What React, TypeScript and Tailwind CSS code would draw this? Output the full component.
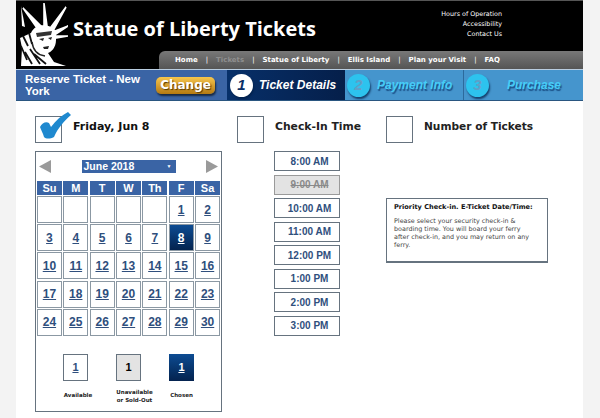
const F = { fontFamily: '"DejaVu Sans", sans-serif' };
const A = { fontFamily: '"Liberation Sans", Arial, sans-serif' };

function Statue() {
  return (
    <svg width="50" height="66" viewBox="0 0 50 66" className="shrink-0">
      <g stroke="#fff" strokeWidth="1.6" fill="#fff">
        <path d="M26 24 L26 1 L29 24Z" />
        <path d="M19 26 L5 6 L23 24Z" />
        <path d="M33 25 L48 5 L36 27Z" />
        <path d="M37 29 L50 24 L38 32Z" />
        <path d="M38 34 L50 34 L38 36Z" />
      </g>
      <path d="M4 24 L3 4 L7 25Z" fill="#fff" />
      <path d="M13 31 C18 20 34 22 38 30 L38 38 C38 46 33 50 30 51 L36 60 L48 64 L3 64 L4 46 L2 36 Z" fill="#fff" />
      <path d="M18 31 L34 29 L33 33 L19 35Z" fill="#333" />
      <path d="M21 37 L26 36 L25 39 Z M30 36 L34 35 L33 38 Z M25 45 L31 44 L30 47 L26 47 Z" fill="#222" />
      <path d="M5 34 L10 44 M7 50 L14 62 M12 47 L22 62 M3 44 L9 58 M16 52 L28 62 M11 31 L14 42" stroke="#111" strokeWidth="1.8" fill="none" />
      <path d="M14 40 C15 48 19 53 27 54" stroke="#222" strokeWidth="1.5" fill="none" />
    </svg>
  );
}

function Circle({ n, active }: { n: string; active?: boolean }) {
  return (
    <span
      className={`flex h-[23px] w-[23px] shrink-0 items-center justify-center rounded-full text-[15px] font-bold italic shadow-[1px_2px_2px_rgba(0,30,70,0.7)] ${
        active ? "bg-white text-[#0b2f66]" : "bg-[#2dc3ee] text-[#5f9fc8]"
      }`}
      style={A}
    >
      {n}
    </span>
  );
}

const days: (number | null)[] = [null, null, null, null, null, 1, 2, ...Array.from({ length: 28 }, (_, i) => i + 3)];
const times = ["8:00 AM", "9:00 AM", "10:00 AM", "11:00 AM", "12:00 PM", "1:00 PM", "2:00 PM", "3:00 PM"];

function Box({ children }: { children?: React.ReactNode }) {
  return <div className="relative h-[27px] w-[27px] shrink-0 border border-[#66737f] bg-white">{children}</div>;
}

function DayCell({ d }: { d: number | null }) {
  const chosen = d === 8;
  return (
    <div
      className={`flex h-[27px] items-center justify-center border border-[#8b98a3] text-[12px] font-bold underline ${
        chosen ? "bg-gradient-to-b from-[#0d4c93] to-[#04234f] text-white" : "bg-white text-[#2f4f7d]"
      }`}
      style={A}
    >
      {d ?? ""}
    </div>
  );
}

function Sep() {
  return <span className="mx-[8px] font-normal">|</span>;
}

export default function App() {
  return (
    <div className="h-[418px] w-[600px] overflow-hidden bg-[#f3f3f3]">
      <div className="ml-[16px] h-[418px] w-[567px] bg-white">
        <header className="flex h-[69px] border-t border-[#555] bg-black">
          <div className="ml-[2px] mt-[1px]"><Statue /></div>
          <div className="flex min-w-0 flex-1 flex-col">
            <div className="flex h-[50px]">
              <div className="ml-[5px] mt-[14px] w-[300px] whitespace-nowrap text-[20px] font-bold leading-[27px] text-white" style={{ fontFamily: '"Open Sans", sans-serif' }}>
                Statue of Liberty Tickets
              </div>
              <div className="ml-[68px] mt-[8px] w-[61px] text-right text-[6.4px] leading-[10px] text-white" style={F}>
                <div className="whitespace-nowrap">Hours of Operation</div>
                <div>Accessibility</div>
                <div>Contact Us</div>
              </div>
            </div>
            <nav className="ml-[91px] flex h-[18px] items-center whitespace-nowrap rounded-tl-[6px] bg-gradient-to-b from-[#787878] to-[#555] pl-[16px] text-[7px] font-bold text-white" style={F}>
              <span>Home</span>
              <Sep />
              <span className="text-[#8f8f8f]">Tickets</span>
              <Sep />
              <span>Statue of Liberty</span>
              <Sep />
              <span>Ellis Island</span>
              <Sep />
              <span>Plan your Visit</span>
              <Sep />
              <span>FAQ</span>
            </nav>
          </div>
        </header>
        <div className="flex h-[32px] border-y border-[#b9cde0] border-b-[#2a5680]">
          <div className="flex w-[211px] items-center bg-[#3a64a5]">
            <div className="ml-[9px] w-[120px] text-[11.5px] font-bold leading-[12px] text-white" style={A}>
              Reserve Ticket - New York
            </div>
            <div className="ml-[11px] flex h-[17px] w-[59px] items-center justify-center rounded-[5px] bg-gradient-to-b from-[#f6c64c] to-[#b57a10] text-[12px] font-bold text-white shadow-[1px_2px_2px_rgba(0,0,0,0.6)] [text-shadow:1px_1px_1px_#5a3a00]" style={F}>
              Change
            </div>
          </div>
          <div className="flex w-[118px] items-center gap-[6px] bg-gradient-to-r from-[#07306a] to-[#051f4a] pl-[3px]">
            <Circle n="1" active />
            <span className="whitespace-nowrap text-[12px] font-bold italic text-white" style={A}>Ticket Details</span>
          </div>
          <div className="flex w-[119px] items-center gap-[7px] border-r border-[#2c6a9c] bg-[#4595cd] pl-[2px]">
            <Circle n="2" />
            <span className="whitespace-nowrap text-[12px] font-bold italic text-[#45cdf7] [text-shadow:1px_2px_1px_#1a4f86]" style={A}>Payment Info</span>
          </div>
          <div className="flex flex-1 items-center bg-[#4595cd] pl-[2px]">
            <Circle n="3" />
            <span className="ml-[18px] whitespace-nowrap text-[12px] font-bold italic text-[#45cdf7] [text-shadow:1px_2px_1px_#1a4f86]" style={A}>Purchase</span>
          </div>
        </div>
        <main className="flex pl-[19px] pt-[15px]">
          <section className="w-[187px] shrink-0">
            <div className="flex h-[27px] items-start gap-[11px]">
              <Box>
                <svg width="31" height="27" viewBox="0 0 31 27" className="absolute -top-[5px] left-[4px]">
                  <path d="M0 15 C2 11 6 9 9 11 L11 15 C16 8 22 3 28 0 L31 3 C24 9 18 16 14 25 C10 27 6 27 4 25 C3 21 1 18 0 15Z" fill="#1f89cf" />
                </svg>
              </Box>
              <span className="mt-[3px] whitespace-nowrap text-[11px] font-bold text-[#111]" style={F}>Friday, Jun 8</span>
            </div>
            <div className="mt-[8px] h-[261px] border border-[#66737f] bg-white">
              <div className="flex h-[29px] items-center justify-between px-[3px]">
                <svg width="12" height="13" viewBox="0 0 12 13"><path d="M12 0V13L0 6.5Z" fill="#9a9a9a" /></svg>
                <div className="flex h-[13px] w-[94px] items-center bg-[#3a64a5] pl-[2px] text-[10.5px] font-bold text-white" style={A}>
                  June 2018
                  <span className="ml-auto mr-[4px] text-[5px]">▼</span>
                </div>
                <svg width="12" height="13" viewBox="0 0 12 13"><path d="M0 0V13L12 6.5Z" fill="#9a9a9a" /></svg>
              </div>
              <div className="grid grid-cols-7 gap-x-[1.5px] px-[1px]">
                {["Su", "M", "T", "W", "Th", "F", "Sa"].map((d) => (
                  <div key={d} className="flex h-[14px] items-center justify-center bg-[#3a64a5] text-[11px] font-bold text-white" style={A}>{d}</div>
                ))}
              </div>
              <div className="mt-[1px] grid grid-cols-7 gap-x-[1.5px] gap-y-[1.2px] px-[1px]">
                {days.map((d, i) => <DayCell key={i} d={d} />)}
              </div>
              <div className="mt-[18px] flex pl-[13px]">
                <div className="flex w-[53px] flex-col items-center">
                  <div className="flex h-[27px] w-[25px] items-center justify-center border border-[#66737f] text-[11px] font-bold text-[#2f4f7d] underline" style={A}>1</div>
                  <div className="ml-[5px] mt-[10px] text-[5.5px] font-bold leading-[8px] text-[#222]" style={F}>Available</div>
                </div>
                <div className="flex w-[53px] flex-col items-center">
                  <div className="flex h-[27px] w-[25px] items-center justify-center border border-[#66737f] bg-[#e3e3e3] text-[11px] font-bold text-black" style={A}>1</div>
                  <div className="ml-[12px] mt-[7px] whitespace-nowrap text-center text-[5.5px] font-bold leading-[8px] text-[#222]" style={F}>Unavailable<br />or Sold-Out</div>
                </div>
                <div className="flex w-[53px] flex-col items-center">
                  <div className="flex h-[27px] w-[25px] items-center justify-center bg-gradient-to-b from-[#0d4c93] to-[#04234f] text-[11px] font-bold text-white underline" style={A}>1</div>
                  <div className="mt-[10px] text-[5.5px] font-bold leading-[8px] text-[#222]" style={F}>Chosen</div>
                </div>
              </div>
            </div>
          </section>
          <section className="ml-[15px] w-[149px] shrink-0">
            <div className="flex h-[27px] items-start gap-[11px]">
              <Box />
              <span className="mt-[3px] whitespace-nowrap text-[10.8px] font-bold text-[#222]" style={F}>Check-In Time</span>
            </div>
            <div className="ml-[37px] mt-[8px] flex w-[66px] flex-col gap-[3.5px]">
              {times.map((t) => (
                <div
                  key={t}
                  className={`flex h-[20px] items-center justify-center border pl-[5px] text-[10px] font-bold ${
                    t === "9:00 AM" ? "border-[#9a9a9a] bg-[#e3e3e3] text-[#8a8a8a] line-through" : "border-[#66737f] bg-white text-[#2f4f7d]"
                  }`}
                  style={A}
                >
                  {t}
                </div>
              ))}
            </div>
          </section>
          <section className="w-[162px] shrink-0">
            <div className="flex h-[27px] items-start gap-[11px]">
              <Box />
              <span className="mt-[3px] whitespace-nowrap text-[10.6px] font-bold text-[#222]" style={F}>Number of Tickets</span>
            </div>
            <div className="mt-[55px] h-[65px] border border-[#66737f] border-b-2 bg-white pl-[7px] pr-[15px] pt-[4px] leading-[8px] text-[#444]" style={F}>
              <div className="whitespace-nowrap text-[6.6px] font-bold text-[#111]">Priority Check-in. E-Ticket Date/Time:</div>
              <div className="mt-[6px] text-[6.4px]">Please select your security check-in &amp; boarding time. You will board your ferry after check-in, and you may return on any ferry.</div>
            </div>
          </section>
        </main>
      </div>
    </div>
  );
}
